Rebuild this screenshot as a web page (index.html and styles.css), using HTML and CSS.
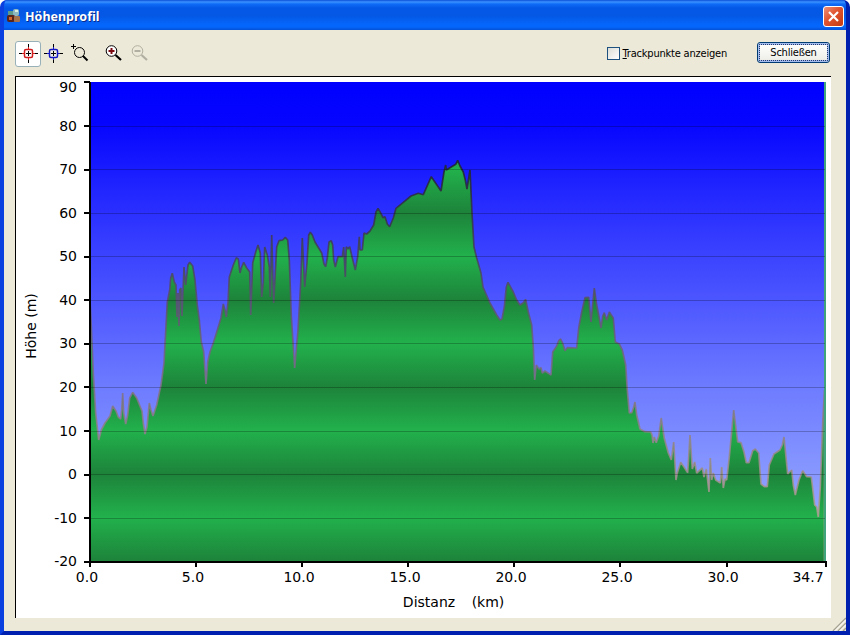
FILE: index.html
```
<!DOCTYPE html>
<html lang="de">
<head>
<meta charset="utf-8">
<title>Höhenprofil</title>
<link rel="stylesheet" href="styles.css">
</head>
<body>
<div class="window">
	<div class="titlebar">
		<svg class="app-icon" width="14" height="14" viewBox="0 0 14 14">
			<rect x="1" y="2" width="5" height="4" fill="#5b9a8c" />
			<rect x="6" y="0" width="6" height="7" rx="2" fill="#8fb9c0" />
			<rect x="8" y="1" width="3" height="2" fill="#dceee4" />
			<rect x="0" y="6" width="8" height="7" rx="2" fill="#5a2418" />
			<rect x="2" y="8" width="3" height="3" fill="#d0662c" />
			<rect x="7" y="7" width="6" height="6" rx="1" fill="#a5724e" />
		</svg>
		<span class="title">Höhenprofil</span>
		<button class="close" aria-label="Schließen">
			<svg width="19" height="19" viewBox="0 0 19 19">
				<path d="M 5 5 L 14 14 M 14 5 L 5 14" stroke="#fff" stroke-width="2.2" />
			</svg>
		</button>
	</div>
	<div class="content">
		<div class="toolbar">
			<button class="tool active">
				<svg width="20" height="20" viewBox="0 0 20 20" fill="none">
					<path d="M 1 10.500 H 20 M 10.500 1 V 20" stroke="#000" />
					<rect x="6.500" y="6.500" width="8" height="8" rx="1.500" fill="#fff" stroke="#d01c1c" stroke-width="1.500" />
					<path d="M 4 10.500 H 7 M 14 10.500 H 17 M 10.500 4 V 7 M 10.500 14 V 17" stroke="#d01c1c" />
					<path d="M 8 10.500 H 13 M 10.500 8 V 13" stroke="#000" />
				</svg>
			</button>
			<button class="tool">
				<svg width="20" height="20" viewBox="0 0 20 20" fill="none">
					<path d="M 1 10.500 H 20 M 10.500 1 V 20" stroke="#000" />
					<rect x="6.500" y="6.500" width="8" height="8" rx="1.500" fill="#f1efe5" stroke="#1416c4" stroke-width="1.500" />
					<path d="M 4 10.500 H 7 M 14 10.500 H 17 M 10.500 4 V 7 M 10.500 14 V 17" stroke="#1416c4" />
					<path d="M 8 10.500 H 13 M 10.500 8 V 13" stroke="#000" />
				</svg>
			</button>
			<button class="tool">
				<svg width="20" height="20" viewBox="0 0 20 20" fill="none" stroke="#000">
					<path d="M 2 3.500 H 7 M 4.500 1 V 6" />
					<circle cx="10.500" cy="9.500" r="5" />
					<path d="M 14 13 L 18.500 17.500" stroke-width="2" />
				</svg>
			</button>
			<button class="tool second">
				<svg width="20" height="20" viewBox="0 0 20 20" fill="none" stroke="#000">
					<circle cx="8.500" cy="8" r="5.300" fill="#fff" />
					<path d="M 5.500 8 H 11.500 M 8.500 5 V 11" stroke="#7a0a10" stroke-width="2" />
					<path d="M 12.500 12 L 18 17" stroke-width="2.200" />
				</svg>
			</button>
			<button class="tool">
				<svg width="20" height="20" viewBox="0 0 20 20" fill="none" stroke="#b1afa1">
					<circle cx="8.500" cy="8" r="5.300" />
					<path d="M 5.500 8 H 11.500" stroke-width="2" />
					<path d="M 12.500 12 L 18 17" stroke-width="2.200" />
				</svg>
			</button>
			<label class="check"><span class="box"></span><span><u>T</u>rackpunkte anzeigen</span></label>
			<button class="push">Schließen</button>
		</div>
		<div class="panel">
			<svg class="chart" width="815" height="541" viewBox="16 77 815 541">
				<defs>
					<linearGradient id="sky" gradientUnits="userSpaceOnUse" x1="0" y1="82" x2="0" y2="561">
						<stop offset="0" stop-color="#0000ff" />
						<stop offset="0.080" stop-color="#0404ff" />
						<stop offset="0.300" stop-color="#3036ff" />
						<stop offset="0.640" stop-color="#6e7cff" />
						<stop offset="1" stop-color="#a2b4ff" />
					</linearGradient>
					<linearGradient id="ground" gradientUnits="userSpaceOnUse" x1="0" y1="474" x2="0" y2="561" spreadMethod="repeat">
						<stop offset="0" stop-color="#1d833a" />
						<stop offset="0.500" stop-color="#22b14c" />
						<stop offset="1" stop-color="#1d833a" />
					</linearGradient>
					<linearGradient id="outline" gradientUnits="userSpaceOnUse" x1="0" y1="160" x2="0" y2="520">
						<stop offset="0" stop-color="#20202c" />
						<stop offset="0.300" stop-color="#4b4560" />
						<stop offset="0.600" stop-color="#7c6c86" />
						<stop offset="1" stop-color="#b0a08c" />
					</linearGradient>
				</defs>
				<rect x="90" y="82" width="735" height="480" fill="url(#sky)" />
				<path fill="url(#ground)" stroke="url(#outline)" stroke-width="1.700" stroke-opacity="0.850" stroke-linejoin="bevel" d="M 90 562 V 300
					L 91 320 93.300 373 95.700 413 98.700 440 101.300 430 105 423 110 416 112.700 406 116 411 118.300 417 120.700 419 121.700 410 122.700 393 123.700 413 125.700 424 127.700 415 129.700 398 132.700 392.300 136.700 398 142 411 143.300 423 145 434 147 427 149.300 403 151 410 153 416 156.700 405
					161 385 164 363 167.300 302 169.700 290 170.700 278 172.300 273.300 174.300 282 176 285 177 317 178 293 179 326 179.700 290 181 288 182 316 184 267 185.700 285 188 265 189.700 262.300 192.700 266 195 280 197.300 305 199.300 320 201.300 342 203.700 352 206 384 207.700 362 210 352
					213.300 343 216.700 332 221 318 223.300 304 225 310 226.300 317 228 302 229.300 277 233.300 265 236.300 257.700 238.300 259 240 273 241.300 268 243.700 262.300 246.700 268 249.700 272 250.700 315 252.700 263 255.700 252 258 245 260.300 253 261.700 297 263.300 283 264.700 247 267.300 255 269.300 267 270.300 297 271.700 235
					273.700 303 275.300 273 276.700 247 279 240.700 282.700 240 285.300 237.300 287.700 240 289.300 260 291.300 316 294.700 368 298 330 300.700 283 302.300 238 304.700 287 307 263 308.700 235 310.300 232.300 312.300 235 315 242 321.700 253 324 264 325.700 266.700 327.300 258 329 242 331.300 240.700 332.700 245 333.700 260 335.300 267
					338 256.700 342.300 256.700 343.700 247 345.300 277 346.300 246.700 348 249 349.700 246.700 352 256.700 355.300 270 357.700 256.700 359.300 236.700 360 250 362.300 250 364 233 366.700 234 370 231 373.700 225 376 212 378 208.300 380.700 213 383 217.700 385 216.700 387.300 224 389.700 226.700 393.300 218 396 208.300
					403.300 202.300 411 196 418.300 193.300 423.300 194.700 431.300 176.700 441 191 444 172 445.700 165 446.300 170 455.700 164.300 457.700 160.300 460 166 463.300 172 465.300 180 467 189 470 170 472 213 474 247 476.700 258 481 273 483 287 490 303 496.700 315 500 320 502 319 504.300 307 506.300 287 508 282.300
					513.300 292 516.700 300 520 305 523.300 302.700 525.700 299.300 528.300 312 531.700 325 533.300 347 534.700 380 536.300 365 539 369 541 367.700 542.300 373 545 371 551 375 552.700 352 556.700 346 558.700 340.700 560.700 339 563 344 565 350.700 567.300 347.700 576.700 348 578.700 328 581.700 312 585 297.700 588.700 297.300
					591 322 594.300 288 596.700 305 598.700 315 601 328 602.700 316 604.300 312.700 606.700 320 609.300 312 613.300 318 615.300 342 619.300 344 622.300 350 625.700 365 627.300 390 629.300 413 631.700 412.700 633.700 407 635 402 636.700 415 640 429 645 431.700 650.700 432 652 435 653 443 654.300 437 656.200 442.700 658.700 436
					661.200 418 664.200 438 668.300 453 671.300 460 673.700 442 676 480 677.300 473 680.700 462.300 684 467 687.700 472.700 690 435 692.300 469 694.700 462 696.700 473 702.300 468 704 477 706.300 469 709 492 710.300 458 711.700 480 713.300 473 715.700 480 720.300 483 721.700 467 723.300 488 725 479 726.700 480
					729.300 457 733.700 410 737.700 442 741 442.700 744 452 746.300 462.700 749 462.700 752.700 450.700 755.300 449 758.700 453 761 484 764.300 486.700 767.300 486.700 769.300 465 774 454 780 450 782.300 445 784 437 786 457 787.700 474 791.700 470 793.300 485 795.300 495 799 480 802.700 470.700 806.700 476.700 811.300 477
					814.700 505 816.700 507 818.300 517 820.300 487 822.700 423 824.500 390 V 562 Z" />
				<path d="M 825 82 V 562" stroke="#3fa37c" stroke-width="2" />
				<path stroke="#000" stroke-opacity="0.240" d="M 91 126.500 H 825 M 91 169.500 H 825 M 91 213.500 H 825 M 91 256.500 H 825 M 91 300.500 H 825 M 91 343.500 H 825 M 91 387.500 H 825 M 91 431.500 H 825 M 91 474.500 H 825 M 91 518.500 H 825" />
				<path stroke="#000" stroke-width="2" d="M 90 82 V 567 M 89 562 H 827
					M 84 82 H 90 M 84 126 H 90 M 84 170 H 90 M 84 213 H 90 M 84 257 H 90 M 84 300 H 90 M 84 344 H 90 M 84 387 H 90 M 84 431 H 90 M 84 475 H 90 M 84 518 H 90 M 84 562 H 90
					M 196 561 V 567 M 302 561 V 567 M 408 561 V 567 M 514 561 V 567 M 620 561 V 567 M 727 561 V 567 M 826 561 V 567" />
				<g class="y-labels">
					<text x="77" y="92">90</text>
					<text x="77" y="131">80</text>
					<text x="77" y="174">70</text>
					<text x="77" y="218">60</text>
					<text x="77" y="261">50</text>
					<text x="77" y="305">40</text>
					<text x="77" y="348">30</text>
					<text x="77" y="392">20</text>
					<text x="77" y="436">10</text>
					<text x="77" y="479">0</text>
					<text x="77" y="523">-10</text>
					<text x="77" y="566">-20</text>
				</g>
				<g class="x-labels">
					<text x="87" y="582">0.0</text>
					<text x="193" y="582">5.0</text>
					<text x="299" y="582">10.0</text>
					<text x="405" y="582">15.0</text>
					<text x="511" y="582">20.0</text>
					<text x="617" y="582">25.0</text>
					<text x="723" y="582">30.0</text>
					<text x="808" y="582">34.7</text>
					<text x="429" y="607">Distanz</text>
					<text x="488" y="607">(km)</text>
					<text transform="translate(36 326) rotate(-90)">Höhe (m)</text>
				</g>
			</svg>
		</div>
		<svg class="grip" width="14" height="14" viewBox="0 0 14 14">
			<path d="M 1 14 L 14 1 M 6 14 L 14 6 M 11 14 L 14 11" stroke="#a5a291" stroke-width="1.500" />
			<path d="M 2.500 14 L 14 2.500 M 7.500 14 L 14 7.500" stroke="#fff" />
		</svg>
	</div>
</div>
</body>
</html>
```
FILE: styles.css
```
body
{
	margin: 0;
	background: #fff;
	font-family: "DejaVu Sans Condensed", "DejaVu Sans", sans-serif;
	font-stretch: condensed;
	font-size: 11px;
	letter-spacing: -0.2px;
	color: #000;
}
button
{
	padding: 0;
	border: 0;
	background: none;
	font: inherit;
	letter-spacing: inherit;
}
svg
{
	display: block;
}
.window
{
	box-sizing: border-box;
	width: 850px;
	height: 635px;
	display: flex;
	flex-direction: column;
	border: 4px solid;
	border-top: 0;
	border-color: #0a3fd8 #0020b0 #0020b0 #0a3fe0;
	border-radius: 7px 7px 0 0;
	background: #0a50e0;
	overflow: hidden;
}
.titlebar
{
	height: 30px;
	flex: none;
	display: flex;
	align-items: center;
	margin: 0 -4px;
	padding: 2px 6px 0 7px;
	box-sizing: border-box;
	background: linear-gradient(#0a4fd8 0, #3c93ff 2px, #0f6cf5 4px, #0458e6 8px, #0458e4 16px, #0566fc 24px, #0566fb 27px, #0350d8 30px);
}
.title
{
	flex: 1;
	margin-left: 4px;
	font-family: "Noto Sans", sans-serif;
	font-stretch: normal;
	font-size: 12.5px;
	font-weight: bold;
	letter-spacing: 0;
	color: #fff;
	text-shadow: 1px 1px 0 #0a2c8c;
}
.close
{
	width: 21px;
	height: 21px;
	box-sizing: border-box;
	border: 1px solid #fff;
	border-radius: 3px;
	background: linear-gradient(135deg, #ec9078, #e0532e 45%, #c53a12);
}
.content
{
	flex: 1;
	position: relative;
	padding: 11px 15px 0 11px;
	background: #ece9d8;
}
.toolbar
{
	height: 35px;
	display: flex;
	align-items: flex-start;
}
.tool
{
	width: 26px;
	height: 26px;
	box-sizing: border-box;
	padding: 1px 2px 3px;
	border: 1px solid transparent;
	border-radius: 3px;
}
.tool.active
{
	margin-right: -1px;
	border-color: #98b0b8;
	background: #fff;
}
.tool.second
{
	margin-left: 8px;
}
.check
{
	display: flex;
	align-items: center;
	height: 25px;
	margin-left: auto;
	gap: 3px;
}
.check span
{
	white-space: nowrap;
}
.box
{
	width: 11px;
	height: 11px;
	border: 1px solid #1c5180;
	background: linear-gradient(135deg, #dcdcd7, #fff);
}
.push
{
	width: 73px;
	height: 21px;
	margin: 1px 1px 0 30px;
	box-sizing: border-box;
	border: 1px solid #003c74;
	border-radius: 3px;
	background: linear-gradient(#fff, #f0f0ea 85%, #d6d0c5);
	box-shadow: inset 0 0 0 2px #a4bdec;
	outline: 1px dotted #223a70;
	outline-offset: -3px;
}
.panel
{
	width: 815px;
	height: 541px;
	border: solid #000;
	border-width: 1px 0 0 1px;
	background: #fff;
}
.chart text
{
	font-family: "DejaVu Sans", sans-serif;
	font-stretch: normal;
	font-size: 14px;
	letter-spacing: 0;
}
.y-labels
{
	text-anchor: end;
}
.x-labels
{
	text-anchor: middle;
}
.grip
{
	position: absolute;
	right: 0;
	bottom: 0;
}
```
